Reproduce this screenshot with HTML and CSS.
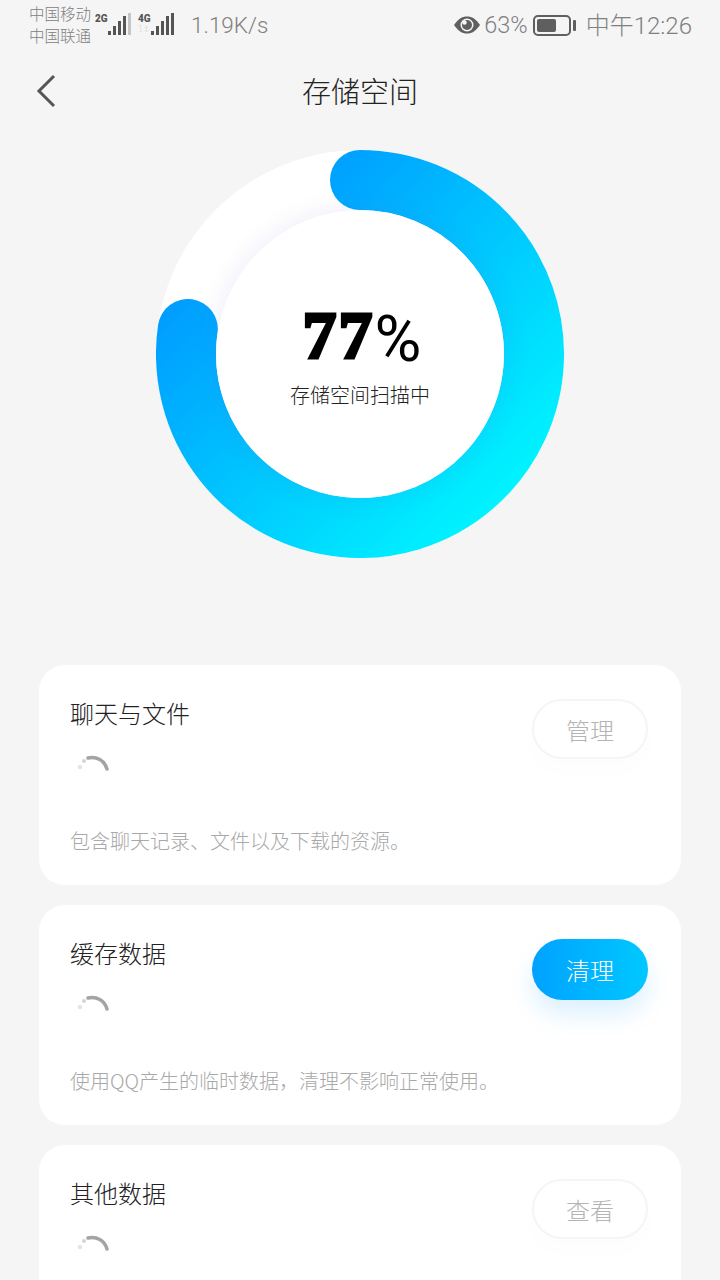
FILE: index.html
```html
<!DOCTYPE html>
<html lang="zh-CN">
<head>
    <meta charset="UTF-8">
    <meta name="viewport" content="width=device-width, initial-scale=1.0">
    <title>存储空间</title>
    <link rel="stylesheet" href="styles.css">
</head>
<body>
    <div class="page">
        <div class="status-bar">
            <div class="status-left">
                <div class="carriers"><span>中国移动</span><span>中国联通</span></div>
                <div class="signal">
                    <div class="net-col"><span class="net-label">2G</span></div>
                    <svg width="24" height="24" viewBox="0 0 24 24">
                        <rect x="1" y="19" width="3" height="4" fill="#555"/>
                        <rect x="6" y="14" width="3" height="9" fill="#555"/>
                        <rect x="11" y="9" width="3" height="14" fill="#555"/>
                        <rect x="16" y="4" width="3" height="19" fill="#555"/>
                        <rect x="21" y="1" width="3" height="22" fill="#c4c4c4"/>
                    </svg>
                </div>
                <div class="signal signal-second">
                    <div class="net-col"><span class="net-label">4G</span><span class="net-sub">1↕</span></div>
                    <svg width="24" height="24" viewBox="0 0 24 24">
                        <rect x="1" y="19" width="3" height="4" fill="#555"/>
                        <rect x="6" y="14" width="3" height="9" fill="#555"/>
                        <rect x="11" y="9" width="3" height="14" fill="#555"/>
                        <rect x="16" y="4" width="3" height="19" fill="#555"/>
                        <rect x="21" y="1" width="3" height="22" fill="#555"/>
                    </svg>
                </div>
                <span class="speed">1.19K/s</span>
            </div>
            <div class="status-right">
                <svg class="eye" width="28" height="20" viewBox="0 0 28 20">
                    <path d="M1 10C5 4 9 1.500 14 1.500S23 4 27 10C23 16 19 18.500 14 18.500S5 16 1 10Z" fill="#5f5f5f"/>
                    <circle cx="14" cy="10" r="6.500" fill="#f5f5f5"/>
                    <circle cx="14" cy="10" r="5" fill="#5f5f5f"/>
                    <circle cx="11.500" cy="7.500" r="2.200" fill="#f5f5f5"/>
                </svg>
                <span class="percent">63%</span>
                <div class="battery"><div class="battery-level"></div></div>
                <div class="battery-tip"></div>
                <span class="clock">中午12:26</span>
            </div>
        </div>

        <div class="nav-bar">
            <svg class="back" width="20" height="34" viewBox="0 0 20 34">
                <path d="M18 2L3 17L18 32" fill="none" stroke="#555" stroke-width="3"/>
            </svg>
            <h1>存储空间</h1>
        </div>

        <div class="ring-wrap">
            <div class="ring">
                <div class="ring-track"></div>
                <svg class="ring-arc" width="408" height="408" viewBox="0 0 408 408">
                    <defs>
                        <linearGradient id="arcFill" x1="0.15" y1="0.15" x2="0.92" y2="0.92">
                            <stop offset="0" stop-color="#009cff"/>
                            <stop offset="1" stop-color="#00f4ff"/>
                        </linearGradient>
                    </defs>
                    <path d="M204 30A174 174 0 1 1 31.800 179" fill="none" stroke="url(#arcFill)" stroke-width="60" stroke-linecap="round"/>
                </svg>
                <div class="ring-center">
                    <div class="usage"><span class="usage-num">77</span><span class="usage-unit">%</span></div>
                    <div class="usage-text">存储空间扫描中</div>
                </div>
            </div>
        </div>

        <div class="cards">
            <div class="card">
                <div class="card-main">
                    <div class="card-title">聊天与文件</div>
                    <button class="action">管理</button>
                </div>
                <svg class="spinner" width="40" height="26" viewBox="0 0 40 26">
                    <path d="M17 6A15.500 15.500 0 0 1 36 17" fill="none" stroke="#a4a4a4" stroke-width="3.500" stroke-linecap="round"/>
                    <circle cx="13" cy="9" r="2" fill="#d4d4d4"/>
                    <circle cx="9" cy="15" r="2.200" fill="#e4e4e4"/>
                </svg>
                <p class="card-desc">包含聊天记录、文件以及下载的资源。</p>
            </div>
            <div class="card">
                <div class="card-main">
                    <div class="card-title">缓存数据</div>
                    <button class="action action-primary">清理</button>
                </div>
                <svg class="spinner" width="40" height="26" viewBox="0 0 40 26">
                    <path d="M17 6A15.500 15.500 0 0 1 36 17" fill="none" stroke="#a4a4a4" stroke-width="3.500" stroke-linecap="round"/>
                    <circle cx="13" cy="9" r="2" fill="#d4d4d4"/>
                    <circle cx="9" cy="15" r="2.200" fill="#e4e4e4"/>
                </svg>
                <p class="card-desc">使用QQ产生的临时数据，清理不影响正常使用。</p>
            </div>
            <div class="card">
                <div class="card-main">
                    <div class="card-title">其他数据</div>
                    <button class="action">查看</button>
                </div>
                <svg class="spinner" width="40" height="26" viewBox="0 0 40 26">
                    <path d="M17 6A15.500 15.500 0 0 1 36 17" fill="none" stroke="#a4a4a4" stroke-width="3.500" stroke-linecap="round"/>
                    <circle cx="13" cy="9" r="2" fill="#d4d4d4"/>
                    <circle cx="9" cy="15" r="2.200" fill="#e4e4e4"/>
                </svg>
            </div>
        </div>
    </div>
</body>
</html>
```

FILE: styles.css
```css
html, body {
    margin: 0;
    padding: 0;
}
body {
    font-family: "Noto Sans CJK SC", "Noto Sans", sans-serif;
    font-weight: 300;
    background-color: #f5f5f5;
    color: #222;
}
.page {
    height: 1280px;
    overflow: hidden;
}
.status-bar {
    height: 50px;
    display: flex;
    justify-content: space-between;
    align-items: center;
    padding: 0 28px 0 29px;
    color: #808080;
}
.status-left, .status-right {
    display: flex;
    align-items: center;
}
.carriers {
    display: flex;
    flex-direction: column;
    font-size: 15.5px;
    line-height: 22px;
    margin-bottom: 2px;
}
.signal {
    display: flex;
    align-items: flex-end;
    margin-left: 4px;
    margin-bottom: 3px;
    height: 24px;
}
.signal-second {
    margin-left: 7px;
}
.net-col {
    display: flex;
    flex-direction: column;
    align-self: flex-start;
    width: 12px;
    margin-top: 1px;
}
.net-label {
    font-family: "Roboto", sans-serif;
    font-size: 10px;
    font-weight: 900;
    line-height: 12px;
    color: #555;
}
.net-sub {
    font-family: "DejaVu Sans", sans-serif;
    font-size: 8px;
    line-height: 10px;
    color: #cfcfcf;
}
.speed {
    font-family: "Roboto", sans-serif;
    font-size: 22.5px;
    margin-left: 17px;
}
.eye {
    margin-right: 3px;
}
.percent {
    font-family: "Roboto", sans-serif;
    font-size: 23.5px;
}
.battery {
    width: 38px;
    height: 21px;
    box-sizing: border-box;
    border: 2px solid #5f5f5f;
    border-radius: 5px;
    padding: 2px;
    margin-left: 5px;
}
.battery-level {
    width: 63%;
    height: 100%;
    background-color: #5f5f5f;
    border-radius: 2px;
}
.battery-tip {
    width: 3px;
    height: 11px;
    background-color: #5f5f5f;
    border-radius: 1px;
    margin-left: 2px;
}
.clock {
    font-family: "Roboto", "Noto Sans CJK SC", sans-serif;
    font-size: 24px;
    margin-left: 10px;
    margin-bottom: 3px;
}
.nav-bar {
    height: 84px;
    box-sizing: border-box;
    display: flex;
    align-items: center;
    justify-content: center;
    padding: 0 36px 4px;
}
.back {
    margin-right: auto;
    margin-top: 2px;
    flex-shrink: 0;
}
.nav-bar h1 {
    margin: 0 auto 0 0;
    padding-right: 20px;
    font-size: 29px;
    font-weight: 300;
    line-height: 40px;
    color: #222;
}
.ring-wrap {
    display: flex;
    justify-content: center;
    padding-top: 16px;
}
.ring {
    display: grid;
    width: 408px;
    height: 408px;
}
.ring > * {
    grid-area: 1 / 1;
}
.ring-track {
    border-radius: 50%;
    background-color: #fff;
}
.ring-center {
    place-self: center;
    width: 288px;
    height: 288px;
    border-radius: 50%;
    background-color: #fff;
    box-shadow: 0 0 24px rgba(90, 90, 200, 0.12);
    display: flex;
    flex-direction: column;
    align-items: center;
    justify-content: center;
}
.usage {
    display: flex;
    align-items: baseline;
    color: #000;
    line-height: 68px;
    margin-top: 3px;
    margin-left: 4px;
}
.usage-num {
    font-family: "Liberation Serif", serif;
    font-size: 68px;
    font-weight: 700;
    letter-spacing: 2px;
    -webkit-text-stroke: 3px #000;
}
.usage-unit {
    font-family: "Roboto", sans-serif;
    font-size: 64px;
    font-weight: 400;
    position: relative;
    top: 3px;
}
.usage-text {
    font-size: 20px;
    line-height: 30px;
    margin-top: 9px;
    margin-bottom: 1px;
}
.cards {
    display: flex;
    flex-direction: column;
    gap: 20px;
    padding: 107px 39px 0;
}
.card {
    height: 220px;
    flex-shrink: 0;
    box-sizing: border-box;
    padding: 34px 33px 0 31px;
    background-color: #fff;
    border-radius: 26px;
}
.card-main {
    display: flex;
    justify-content: space-between;
    align-items: flex-start;
    height: 60px;
}
.card-title {
    font-size: 24px;
    line-height: 30px;
    margin-top: -1px;
}
.action {
    width: 116px;
    height: 60px;
    font-family: inherit;
    font-size: 24px;
    font-weight: 300;
    color: #b4b4b4;
    background-color: #fff;
    border: 2px solid #f5f5f5;
    border-radius: 31px;
    box-shadow: 0 12px 24px rgba(0, 0, 0, 0.012);
    padding: 0;
}
.action-primary {
    height: 61px;
    color: #fff;
    border: none;
    background-image: linear-gradient(90deg, #00a2ff, #00c8ff);
    box-shadow: 0 14px 24px rgba(0, 150, 255, 0.14);
}
.spinner {
    display: block;
    margin-top: -7px;
    margin-left: 1px;
}
.card-desc {
    margin: 48px 0 0;
    font-size: 20px;
    line-height: 30px;
    color: #a8a8a8;
}
```
